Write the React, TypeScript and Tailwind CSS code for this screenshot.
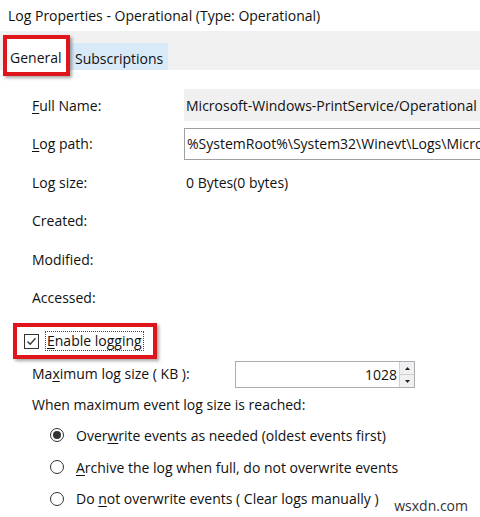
function U({ children }: { children: string }) {
  return <span className="underline underline-offset-2">{children}</span>;
}

function Radio({ checked }: { checked?: boolean }) {
  return (
    <span className="w-[14px] h-[14px] rounded-full border border-[#333] bg-white flex items-center justify-center shrink-0">
      {checked && <span className="w-[8px] h-[8px] rounded-full bg-[#333]" />}
    </span>
  );
}

const rows: { label: React.ReactNode; value?: React.ReactNode }[] = [
  {
    label: (
      <>
        <U>F</U>ull Name:
      </>
    ),
    value: (
      <div className="h-[32px] bg-[#f0f0f0] flex items-center pl-[2px] whitespace-nowrap">
        Microsoft-Windows-PrintService/Operational
      </div>
    ),
  },
  {
    label: (
      <>
        <U>L</U>og path:
      </>
    ),
    value: (
      <div className="h-[32px] bg-white border border-[#a0a0a0] border-r-0 flex items-center pl-[2px] whitespace-nowrap overflow-hidden">
        %SystemRoot%\System32\Winevt\Logs\Microsoft-Windows-PrintService%4Operational.evtx
      </div>
    ),
  },
  { label: 'Log size:', value: <div className="pl-[2px]">0 Bytes(0 bytes)</div> },
  { label: 'Created:' },
  { label: 'Modified:' },
  { label: 'Accessed:' },
];

export default function App() {
  return (
    <div
      className="w-[480px] h-[517px] bg-white text-[14px] text-[#111] overflow-hidden relative"
      style={{ fontFamily: '"Open Sans", "Noto Sans", sans-serif' }}
    >
      <div className="h-[31px] flex items-center pl-[8px] text-[14px]">
        Log Properties - Operational (Type: Operational)
      </div>

      <div className="h-[39px] bg-[#f0f0f0] flex items-end pl-[3px]">
        <div className="h-[41px] w-[67px] border-4 border-[#e0141b] bg-white shadow-[2px_2px_3px_rgba(0,0,0,0.35)] flex items-start pt-[8px] pl-[3px] relative z-10 -mb-[6px]">
          General
        </div>
        <div className="h-[27px] bg-[#d8e9f8] flex items-center pt-[3px] px-[5px]">Subscriptions</div>
      </div>

      <div className="pt-[16px]">
        {rows.map((r, i) => (
          <div key={i} className="h-[38.5px] flex items-center">
            <div className="w-[184px] pl-[32px] shrink-0">{r.label}</div>
            <div className="flex-1 min-w-0">{r.value}</div>
          </div>
        ))}
      </div>

      <div className="mt-[6px] ml-[13px] w-[144px] h-[36px] border-4 border-[#e0141b] shadow-[2px_2px_3px_rgba(0,0,0,0.35)] flex items-center pl-[7px] gap-[7px]">
        <span className="w-[15px] h-[15px] border border-[#333] bg-white flex items-center justify-center shrink-0">
          <svg width="11" height="11" viewBox="0 0 11 11">
            <path d="M1.5 5.5 L4.2 8.3 L9.5 2.2" fill="none" stroke="#333" strokeWidth="1.3" />
          </svg>
        </span>
        <span className="outline outline-1 outline-dotted outline-[#444] px-[1px] leading-[18px]">
          <U>E</U>nable logging
        </span>
      </div>

      <div className="h-[29px] mt-[1px] flex items-center">
        <div className="w-[235px] pl-[32px] shrink-0 -mt-[3px]">
          Ma<U>x</U>imum log size ( KB ):
        </div>
        <div className="w-[180px] h-[27px] border border-[#abadb3] flex">
          <div className="flex-1 flex items-center justify-end pr-[2px]">1028</div>
          <div className="w-[15px] flex flex-col border-l border-[#d0d0d0]">
            <div className="flex-1 bg-[#f0f0f0] border-b border-[#d0d0d0] flex items-center justify-center">
              <svg width="5" height="3" viewBox="0 0 5 3">
                <path d="M0 3 L2.5 0 L5 3Z" fill="#222" />
              </svg>
            </div>
            <div className="flex-1 bg-[#f0f0f0] flex items-center justify-center">
              <svg width="5" height="3" viewBox="0 0 5 3">
                <path d="M0 0 L2.5 3 L5 0Z" fill="#222" />
              </svg>
            </div>
          </div>
        </div>
      </div>

      <div className="h-[30px] flex items-center pl-[32px]">When maximum event log size is reached:</div>

      <div className="pl-[50px] flex flex-col">
        <div className="h-[32px] flex items-center gap-[12px]">
          <Radio checked />
          <span>
            Over<U>w</U>rite events as needed (oldest events first)
          </span>
        </div>
        <div className="h-[32px] flex items-center gap-[12px]">
          <Radio />
          <span>
            <U>A</U>rchive the log when full, do not overwrite events
          </span>
        </div>
        <div className="h-[31px] flex items-center gap-[12px]">
          <Radio />
          <span>
            Do <U>n</U>ot overwrite events ( Clear logs manually )
          </span>
        </div>
      </div>

      <div className="absolute right-[12px] bottom-[1px] text-[14px] text-[#333]">wsxdn.com</div>
    </div>
  );
}
